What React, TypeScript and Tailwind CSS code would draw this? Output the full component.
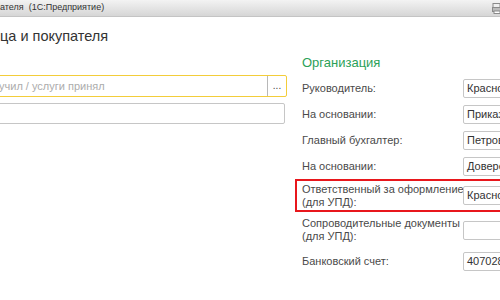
const FONT = "font-['Liberation_Sans',Arial,sans-serif]"

function Field({ value }: { value: string }) {
  return (
    <div className="w-[100px] h-[19px] shrink-0 border border-[#c6c6c6] rounded-[2px] bg-white pl-[3px] text-[11px] leading-[17px] text-[#333] whitespace-nowrap overflow-hidden">
      {value}
    </div>
  )
}

function Row({ label, value, height = 'h-[26px]' }: { label: React.ReactNode; value: string; height?: string }) {
  return (
    <div className={`flex items-center ${height}`}>
      <div className="w-[161px] shrink-0 text-[11px] leading-[13px] text-[#4a4a4a] whitespace-nowrap">{label}</div>
      <Field value={value} />
    </div>
  )
}

export default function App() {
  return (
    <div className={`w-[500px] h-[300px] overflow-hidden bg-white ${FONT}`}>
      <div className="flex h-[17px] items-center justify-between border-b border-[#c4c4c4] bg-gradient-to-b from-[#f3f3f3] to-[#d6d6d6]">
        <span className="text-[9px] text-[#333] whitespace-pre">ателя  (1С:Предприятие)</span>
        <svg width="8" height="11" viewBox="0 0 8 11" className="mt-[1px]">
          <rect x="1" y="0.5" width="7" height="4" fill="#eee" stroke="#8a8a8a" />
          <rect x="0.5" y="4.5" width="8" height="4" fill="#bbb" stroke="#8a8a8a" />
          <rect x="2" y="8" width="6" height="2.5" fill="#fff" stroke="#8a8a8a" />
        </svg>
      </div>

      <h1 className="mt-[9px] text-[14.5px] leading-[20px] text-[#333]">ца и покупателя</h1>

      <div className="flex">
        <div className="w-[287px] shrink-0 pt-[29px]">
          <div className="-ml-[2px] flex h-[22px] items-center border border-[#f3cd3a] rounded-[2px]">
            <span className="flex-1 text-[11px] text-[#acacac] whitespace-nowrap overflow-hidden">учил / услуги принял</span>
            <div className="h-[20px] w-px bg-[#b8b8b8]" />
            <span className="w-[18px] text-center text-[10px] leading-none text-[#444]">...</span>
          </div>
          <div className="-ml-[2px] mt-[6px] h-[21px] w-[287px] border border-[#c6c6c6] rounded-[2px]" />
        </div>

        <div className="ml-[15px] w-[240px] shrink-0">
          <div className="mt-[8px] h-[18px] text-[13px] leading-[18px] text-[#2ba158]">Организация</div>
          <div className="mt-[3px]">
            <Row label="Руководитель:" value="Красноперова" />
            <Row label="На основании:" value="Приказа" />
            <Row label="Главный бухгалтер:" value="Петрова" />
            <Row label="На основании:" value="Доверенности" />
            <div className="-ml-[7px] flex h-[33px] items-center border-2 border-[#e8171c] pl-[5px]">
              <div className="w-[161px] shrink-0 text-[11px] leading-[13px] text-[#4a4a4a] whitespace-nowrap">
                Ответственный за оформление<br />(для УПД):
              </div>
              <Field value="Красноперова" />
            </div>
            <Row label={<>Сопроводительные документы<br />(для УПД):</>} value="" height="h-[36px]" />
            <Row label="Банковский счет:" value="40702810" />
          </div>
        </div>
      </div>
    </div>
  )
}
